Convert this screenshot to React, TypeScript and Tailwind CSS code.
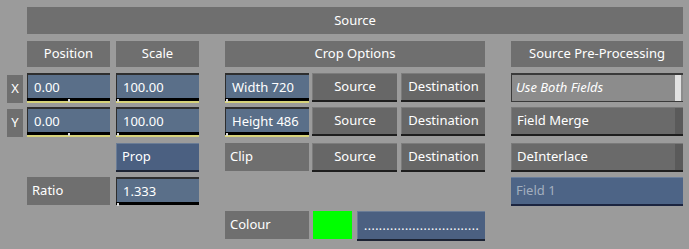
import React from "react";

const font = { fontFamily: '"Noto Sans", "Open Sans", sans-serif' };

function Header({ children, w }: { children: React.ReactNode; w: string }) {
  return (
    <div className={`${w} h-[26px] bg-[#6f6f6f] flex items-center justify-center text-white text-[13px]`}>{children}</div>
  );
}

function Field({ value, yellow = true, w = "w-[83px]", tickLeft }: { value: string; yellow?: boolean; w?: string; tickLeft: string }) {
  return (
    <div className={`${w} h-[30px] flex flex-col`}>
      <div className="flex-1 bg-[#5a6f89] border-t-[2px] border-l border-[#2e2e2e] flex items-center pt-[3px] pl-[6px] text-white text-[13px]">
        {value}
      </div>
      <div className="h-[4px] bg-black relative">
        <div className={`absolute top-[1px] ${tickLeft} w-[2px] h-[3px] bg-[#d8d8d8]`} />
      </div>
      <div className={`h-[2px] ${yellow ? "bg-[#d6d27a]" : "bg-transparent"}`} />
    </div>
  );
}

function Label({ children, w = "w-[84px]", h = "h-[28px]" }: { children: React.ReactNode; w?: string; h?: string }) {
  return (
    <div className={`${w} ${h} bg-[#6f6f6f] flex items-center pl-[5px] text-white text-[13px]`}>{children}</div>
  );
}

function Btn({ children, w }: { children: React.ReactNode; w: string }) {
  return (
    <div className={`${w} h-[29px] flex flex-col`}>
      <div className="flex-1 bg-[#676767] border-t border-l border-[#7c7c7c] flex items-center justify-center text-white text-[13px]">
        {children}
      </div>
      <div className="h-[2px] bg-[#1e1e1e]" />
    </div>
  );
}

function PreBtn({ children }: { children: React.ReactNode }) {
  return (
    <div className="w-[172px] h-[29px] flex flex-col">
      <div className="flex-1 flex bg-[#6a6a6a] border-t border-l border-[#7a7a7a]">
        <div className="flex-1 flex items-center pl-[5px] text-white text-[13px]">{children}</div>
        <div className="w-[8px] bg-[#5a5a5a]" />
      </div>
      <div className="h-[2px] bg-[#1e1e1e]" />
    </div>
  );
}

export default function App() {
  return (
    <div className="w-[689px] h-[249px] bg-[#9b9b9b] relative overflow-hidden" style={font}>
      <div className="pt-[7px] pl-[27px]">
        <div className="w-[656px] h-[27px] bg-[#6f6f6f] flex items-center justify-center text-white text-[13px]">Source</div>
      </div>
      <div className="grid grid-cols-[20px_89px_109px_87px_89px_110px_172px] grid-rows-[32px_34px_36px_34px_34px_28px] pl-[7px] pt-[7px] items-start">
        {/* header row */}
        <div />
        <Header w="w-[83px]">Position</Header>
        <Header w="w-[83px]">Scale</Header>
        <div className="col-span-3">
          <Header w="w-[260px]">Crop Options</Header>
        </div>
        <Header w="w-[172px]">Source Pre-Processing</Header>

        {/* row X */}
        <div className="w-[16px] h-[28px] mt-[2px] bg-[#6f6f6f] flex items-center justify-center text-white text-[13px]">X</div>
        <Field value="0.00" tickLeft="left-[41px]" />
        <Field value="100.00" tickLeft="left-[1px]" />
        <Field value="Width 720" w="w-[84px]" tickLeft="left-[1px]" />
        <Btn w="w-[85px]">Source</Btn>
        <Btn w="w-[84px]">Destination</Btn>
        <div className="w-[172px] h-[29px] flex bg-[#8c8c8c] border-t-[2px] border-l border-b border-[#3a3a3a]">
          <div className="flex-1 flex items-center pl-[4px] text-white italic text-[13px]">Use Both Fields</div>
          <div className="w-[6px] bg-[#e2e2e2] mr-[2px]" />
        </div>

        {/* row Y */}
        <div className="w-[16px] h-[28px] mt-[2px] bg-[#6f6f6f] flex items-center justify-center text-white text-[13px]">Y</div>
        <Field value="0.00" tickLeft="left-[41px]" />
        <Field value="100.00" tickLeft="left-[1px]" />
        <Field value="Height 486" w="w-[84px]" tickLeft="left-[1px]" />
        <Btn w="w-[85px]">Source</Btn>
        <Btn w="w-[84px]">Destination</Btn>
        <PreBtn>Field Merge</PreBtn>

        {/* row 3 */}
        <div />
        <div />
        <div className="w-[83px] h-[29px] flex flex-col">
          <div className="flex-1 bg-[#4b6081] border-t border-l border-[#6a7c96] flex items-center pl-[5px] text-white text-[13px]">Prop</div>
          <div className="h-[2px] bg-[#1c2333]" />
        </div>
        <Label>Clip</Label>
        <Btn w="w-[85px]">Source</Btn>
        <Btn w="w-[84px]">Destination</Btn>
        <PreBtn>DeInterlace</PreBtn>

        {/* row 4 */}
        <div />
        <Label w="w-[83px]">Ratio</Label>
        <Field value="1.333" yellow={false} tickLeft="left-[1px]" />
        <div />
        <div />
        <div />
        <div className="w-[172px] h-[29px] flex flex-col">
          <div className="flex-1 bg-[#4d6486] border-t border-[#6b7f9c] flex items-center pl-[5px] text-[#a3afbf] text-[13px]">Field 1</div>
          <div className="h-[2px] bg-[#1c2540]" />
        </div>

        {/* row 5 */}
        <div />
        <div />
        <div />
        <Label>Colour</Label>
        <div className="col-span-2 flex items-start gap-[5px] pl-[1px]">
          <div className="w-[39px] h-[28px] bg-[#00ff00]" />
          <div className="w-[128px] h-[30px] flex flex-col">
            <div className="flex-1 bg-[#4b6081] border-t border-l border-[#6a7c96] flex items-center pl-[6px] text-white text-[12px] leading-none tracking-[0.5px]">
              ...............................
            </div>
            <div className="h-[2px] bg-[#1c2333]" />
          </div>
        </div>
        <div />
      </div>
    </div>
  );
}
